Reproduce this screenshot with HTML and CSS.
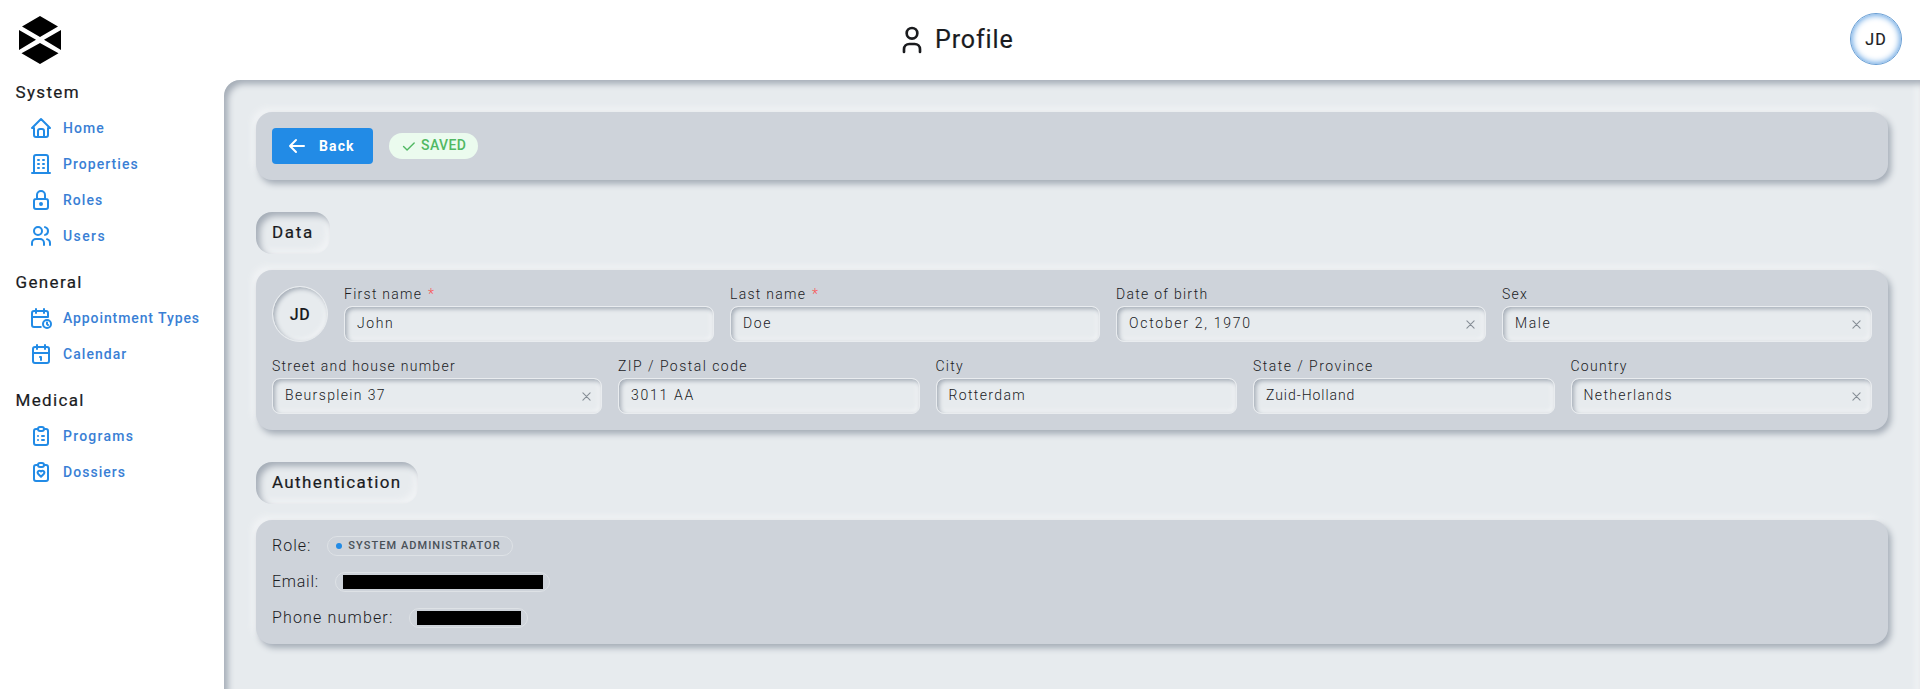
FILE: index.html
```html
<!DOCTYPE html>
<html lang="en">
<head>
<meta charset="utf-8">
<title>Profile</title>
<link rel="stylesheet" href="styles.css">
</head>
<body>
<div class="app">
  <aside class="sidebar">
    <svg class="logo" viewBox="0 0 42 48"><path d="M21 0 39 10.5 21 21 3 10.5zM21 27 39.5 37.3 21 48 2.5 37.3zM0 14 17 23.7 0 34zM42 14 25 23.7 42 34z"/></svg>
    <nav>
      <h2 class="group">System</h2>
      <a class="link"><svg class="icon" viewBox="0 0 24 24"><path d="M5 12H3l9-9 9 9h-2M5 12v7a2 2 0 0 0 2 2h10a2 2 0 0 0 2-2v-7M9 21v-6a2 2 0 0 1 2-2h2a2 2 0 0 1 2 2v6"/></svg><span>Home</span></a>
      <a class="link"><svg class="icon" viewBox="0 0 24 24"><path d="M3 21h18M9 8h1M9 12h1M9 16h1M14 8h1M14 12h1M14 16h1M5 21V5a2 2 0 0 1 2-2h10a2 2 0 0 1 2 2v16"/></svg><span>Properties</span></a>
      <a class="link"><svg class="icon" viewBox="0 0 24 24"><path d="M5 13a2 2 0 0 1 2-2h10a2 2 0 0 1 2 2v6a2 2 0 0 1-2 2H7a2 2 0 0 1-2-2zM11 16a1 1 0 1 0 2 0 1 1 0 0 0-2 0M8 11V7a4 4 0 1 1 8 0v4"/></svg><span>Roles</span></a>
      <a class="link"><svg class="icon" viewBox="0 0 24 24"><path d="M5 7a4 4 0 1 0 8 0 4 4 0 1 0-8 0M3 21v-2a4 4 0 0 1 4-4h4a4 4 0 0 1 4 4v2M16 3.13a4 4 0 0 1 0 7.75M21 21v-2a4 4 0 0 0-3-3.85"/></svg><span class="loose">Users</span></a>
      <h2 class="group">General</h2>
      <a class="link"><svg class="icon" viewBox="0 0 24 24"><path d="M11.8 21H5a2 2 0 0 1-2-2V7a2 2 0 0 1 2-2h12a2 2 0 0 1 2 2v4M14 18a4 4 0 1 0 8 0 4 4 0 1 0-8 0M15 3v4M7 3v4M3 11h16M18 16.5V18l1 1"/></svg><span class="tight">Appointment Types</span></a>
      <a class="link"><svg class="icon" viewBox="0 0 24 24"><path d="M4 7a2 2 0 0 1 2-2h12a2 2 0 0 1 2 2v12a2 2 0 0 1-2 2H6a2 2 0 0 1-2-2zM16 3v4M8 3v4M4 11h16M11 15h1M12 15v3"/></svg><span>Calendar</span></a>
      <h2 class="group">Medical</h2>
      <a class="link"><svg class="icon" viewBox="0 0 24 24"><path d="M9 5H7a2 2 0 0 0-2 2v12a2 2 0 0 0 2 2h10a2 2 0 0 0 2-2V7a2 2 0 0 0-2-2h-2M9 5a2 2 0 0 1 2-2h2a2 2 0 0 1 0 4h-2a2 2 0 0 1-2-2zM9 12h.01M13 12h2M9 16h.01M13 16h2"/></svg><span class="wide">Programs</span></a>
      <a class="link"><svg class="icon" viewBox="0 0 24 24"><path d="M9 5H7a2 2 0 0 0-2 2v12a2 2 0 0 0 2 2h10a2 2 0 0 0 2-2V7a2 2 0 0 0-2-2h-2M9 5a2 2 0 0 1 2-2h2a2 2 0 0 1 0 4h-2a2 2 0 0 1-2-2zM11.993 16.75l2.747-2.815a1.9 1.9 0 0 0 0-2.632 1.775 1.775 0 0 0-2.56 0l-.183.188-.183-.189a1.775 1.775 0 0 0-2.56 0 1.899 1.899 0 0 0 0 2.632z"/></svg><span>Dossiers</span></a>
    </nav>
  </aside>
  <div class="page">
    <header class="header">
      <h1 class="title"><svg class="title-icon" viewBox="0 0 24 24"><path d="M8 7a4 4 0 1 0 8 0 4 4 0 0 0-8 0M6 21v-2a4 4 0 0 1 4-4h4a4 4 0 0 1 4 4v2"/></svg><span>Profile</span></h1>
      <div class="account">JD</div>
    </header>
    <main class="main">
      <section class="card toolbar">
        <button class="back"><svg class="icon" viewBox="0 0 24 24"><path d="M5 12h14M5 12l6 6M5 12l6-6"/></svg><span>Back</span></button>
        <span class="saved"><svg class="check" viewBox="0 0 24 24"><path d="M5 12l5 5L20 7"/></svg><span>SAVED</span></span>
      </section>
      <h2 class="section short">Data</h2>
      <section class="card form">
        <div class="row">
          <div class="avatar">JD</div>
          <div class="field"><label>First name <i>*</i></label><div class="input"><span class="loose">John</span></div></div>
          <div class="field"><label>Last name <i>*</i></label><div class="input"><span class="loose">Doe</span></div></div>
          <div class="field"><label>Date of birth</label><div class="input"><span class="digits">October 2, 1970</span><svg class="clear" viewBox="0 0 10 10"><path d="M1 1l8 8M9 1L1 9"/></svg></div></div>
          <div class="field"><label>Sex</label><div class="input"><span class="loose">Male</span><svg class="clear" viewBox="0 0 10 10"><path d="M1 1l8 8M9 1L1 9"/></svg></div></div>
        </div>
        <div class="row">
          <div class="field street"><label>Street and house number</label><div class="input"><span>Beursplein 37</span><svg class="clear" viewBox="0 0 10 10"><path d="M1 1l8 8M9 1L1 9"/></svg></div></div>
          <div class="field"><label class="slashed">ZIP / Postal code</label><div class="input"><span class="digits">3011 AA</span></div></div>
          <div class="field"><label>City</label><div class="input"><span>Rotterdam</span></div></div>
          <div class="field"><label class="slashed">State / Province</label><div class="input"><span class="tight">Zuid-Holland</span></div></div>
          <div class="field"><label>Country</label><div class="input"><span>Netherlands</span><svg class="clear" viewBox="0 0 10 10"><path d="M1 1l8 8M9 1L1 9"/></svg></div></div>
        </div>
      </section>
      <h2 class="section">Authentication</h2>
      <section class="card auth">
        <div class="line"><span>Role:</span><span class="chip role"><b class="dot"></b><span>SYSTEM ADMINISTRATOR</span></span></div>
        <div class="line"><span class="email-key">Email:</span><span class="chip"><b class="mask email"></b></span></div>
        <div class="line"><span class="phone-key">Phone number:</span><span class="chip"><b class="mask phone"></b></span></div>
      </section>
    </main>
  </div>
</div>
</body>
</html>
```
FILE: styles.css
```css
* { box-sizing: border-box; }
body { margin: 0; overflow: hidden; font-family: Roboto, "Liberation Sans", sans-serif; color: #1a1b1e; background: #fff; }
h1, h2 { margin: 0; font-weight: 400; }
svg { flex: none; }

/* Letter spacing variants */
.link .tight { letter-spacing: .9px; }
.input .tight { letter-spacing: .95px; }
.link .wide { letter-spacing: 1.24px; }
.link .loose { letter-spacing: 1.4px; }
.input .loose { letter-spacing: 1.6px; }
.input .digits { letter-spacing: 1.72px; }

/* Shell */
.app { display: flex; height: 689px; overflow: hidden; }
.sidebar { width: 224px; flex: none; padding: 16px 16px 0; }
.logo { display: block; width: 42px; height: 48px; margin-left: 3px; }
.group { height: 28px; margin: 14px 0 4px -.5px; font-size: 17px; line-height: 28px; letter-spacing: 1.35px; -webkit-text-stroke: .2px; }
.link { display: flex; align-items: center; height: 36px; padding-left: 13px; gap: 10px; color: #3a7fd5; font-size: 14px; font-weight: 500; letter-spacing: 1.05px; white-space: nowrap; }
.icon { width: 24px; height: 24px; }
.icon, .title-icon, .check, .clear { fill: none; stroke: currentColor; stroke-width: 2; stroke-linecap: round; stroke-linejoin: round; }
.link .icon { color: #228be6; }
.page { flex: 1; min-width: 0; display: flex; flex-direction: column; }
.header { height: 80px; flex: none; display: flex; align-items: center; }
.title { display: flex; align-items: center; gap: 7px; margin-left: 672px; font-size: 25px; letter-spacing: .9px; -webkit-text-stroke: .2px; }
.title-icon { width: 32px; height: 32px; }
.title span { padding-bottom: 2px; }
.account { width: 52px; height: 52px; margin: 0 18px 2px auto; border-radius: 50%; border: 1px solid #6a9fd4; box-shadow: inset 0 0 6px 1px #5c9fe2; display: grid; place-items: center; font-size: 16px; letter-spacing: 1px; -webkit-text-stroke: .2px; }
.main { flex: none; height: 640px; padding: 32px; background: #e7ebee; border-radius: 16px 0 0 0; box-shadow: inset 4px 4px 6px #a5adb7, inset -4px -4px 6px #f1f3f5; }

/* Cards */
.card { border-radius: 16px; background: #ced3da; padding: 16px; box-shadow: 3px 4px 6px #a5adb7, -4px -4px 6px #f1f3f5; }
.toolbar { height: 68px; display: flex; gap: 16px; }
.back { width: 101px; height: 36px; padding: 0 0 0 13px; border: 0; border-radius: 4px; background: #228be6; color: #fff; display: flex; align-items: center; gap: 10px; font: 700 14px Roboto, sans-serif; letter-spacing: 1.1px; }
.saved { width: 89px; height: 26px; margin-top: 5px; padding-left: 11px; border-radius: 13px; background: #ebfbee; color: #51b863; display: flex; align-items: center; gap: 4px; font-size: 14px; font-weight: 500; letter-spacing: .4px; }
.saved span { padding-bottom: 2px; }
.check { width: 17px; height: 17px; }
.section { width: fit-content; height: 42px; margin: 32px 0 16px; padding: 0 16px; border-radius: 16px; line-height: 40px; font-size: 17px; letter-spacing: 1.37px; -webkit-text-stroke: .2px; box-shadow: inset 4px 4px 6px #a5adb7, inset -4px -4px 6px #f1f3f5; }
.short { letter-spacing: 1.7px; }

/* Form */
.form { display: grid; gap: 16px; height: 160px; }
.row { display: flex; gap: 16px; height: 56px; }
.avatar { width: 56px; height: 56px; flex: none; border-radius: 50%; border: 1px solid #e9ecef; background: #e7ebee; box-shadow: inset 2px 2px 4px #a5adb7, inset -2px -2px 4px #f1f3f5; display: grid; place-items: center; font-size: 16px; font-weight: 500; letter-spacing: .6px; }
.field { flex: 1; font-size: 14px; font-weight: 300; letter-spacing: 1.27px; }
.street { flex: 0 0 330px; }
.field label { display: block; height: 20px; line-height: 17px; white-space: nowrap; }
.field .slashed { letter-spacing: 1.46px; }
.field i { margin-left: 1px; color: #fa5252; font-style: normal; }
.input { height: 36px; border-radius: 8px; border: 1px solid #e9ecef; background: #e7ebee; box-shadow: inset 2px 2px 4px #a5adb7, inset -2px -2px 4px #f1f3f5; display: flex; align-items: center; justify-content: space-between; padding: 0 10px 0 12px; }
.input span { padding-bottom: 2px; letter-spacing: 1.36px; }
.clear { width: 9px; height: 9px; color: #868e96; stroke-width: 1.2; }

/* Authentication */
.auth { height: 124px; display: grid; gap: 16px; }
.line { display: flex; align-items: center; height: 20px; gap: 16px; font-size: 16px; font-weight: 300; letter-spacing: 1px; }
.line > span:first-child { padding-bottom: 1px; }
.email-key { letter-spacing: .75px; }
.phone-key { letter-spacing: 1.17px; }
.chip { height: 20px; border: 1px solid #dee2e6; border-radius: 10px; display: flex; align-items: center; padding: 0 6px 0 7px; }
.role { font-size: 11px; font-weight: 500; color: #495057; padding: 0 11px 1px 8px; gap: 6px; letter-spacing: 1.05px; }
.dot { width: 6px; height: 6px; border-radius: 50%; background: #228be6; }
.mask { height: 14px; background: #000; }
.email { width: 200px; }
.phone { width: 104px; }
```
